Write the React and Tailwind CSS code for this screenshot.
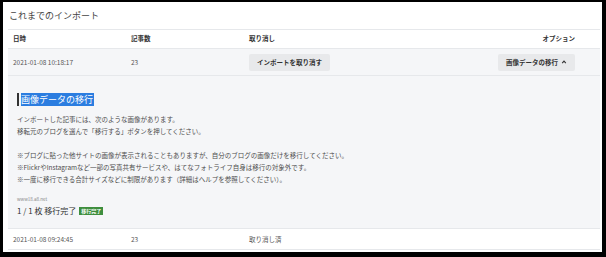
const font = { fontFamily: '"Noto Sans CJK JP", "Noto Sans", sans-serif' };

function Row({ date, count, children, option, className = "" }) {
  return (
    <div
      className={`grid grid-cols-[118px_118px_1fr_auto] items-center pl-[5px] pr-[25px] border-b border-[#e6e8eb] text-[6.5px] leading-[10px] ${className}`}
    >
      <div className="text-[#555]">{date}</div>
      <div className="text-[#555]">{count}</div>
      <div className="flex items-center">{children}</div>
      <div className="flex items-center">{option}</div>
    </div>
  );
}

function GrayButton({ children }) {
  return (
    <button className="h-[17px] rounded-[2px] bg-[#e8e9eb] px-[8px] text-[6.5px] font-bold text-[#333] flex items-center gap-[2px]">
      {children}
    </button>
  );
}

export default function App() {
  return (
    <div
      className="w-[606px] h-[257px] bg-black pt-[2px] pl-[3px] pr-[4px] pb-[5px]"
      style={font}
    >
      <div className="h-full bg-white pl-[5px] pr-[2px] overflow-hidden">
        <div className="h-[27px] flex items-center pl-[1px] text-[9px] text-[#444]">
          これまでのインポート
        </div>

        <div className="grid grid-cols-[118px_118px_1fr_auto] items-center h-[20px] pl-[5px] pr-[25px] border-y border-[#e6e8eb] text-[6.5px] font-bold text-[#333]">
          <div>日時</div>
          <div>記事数</div>
          <div>取り消し</div>
          <div>オプション</div>
        </div>

        <Row
          date="2021-01-08 10:18:17"
          count="23"
          className="h-[27px] bg-[#f5f6f8]"
          option={
            <GrayButton>
              画像データの移行
              <svg width="6" height="6" viewBox="0 0 10 10" className="ml-[1px]">
                <path d="M2 7 L5 3.5 L8 7" fill="none" stroke="#333" strokeWidth="1.8" />
              </svg>
            </GrayButton>
          }
        >
          <GrayButton>インポートを取り消す</GrayButton>
        </Row>

        <div className="h-[153px] bg-[#f5f6f8] border-b border-[#e6e8eb] pl-[9px] pt-[17px]">
          <div className="flex items-stretch h-[13px]">
            <div className="w-[2px] bg-[#333] mr-[2px]" />
            <span className="bg-[#2b7de0] text-white text-[9px] leading-[13px] pr-[1px]">
              画像データの移行
            </span>
          </div>
          <div className="mt-[7px] text-[6.5px] leading-[12px] text-[#4d4d4d]">
            <p>インポートした記事には、次のような画像があります。</p>
            <p>移転元のブログを選んで「移行する」ボタンを押してください。</p>
            <p className="mt-[12px]">
              ※ブログに貼った他サイトの画像が表示されることもありますが、自分のブログの画像だけを移行してください。
            </p>
            <p>※FlickrやInstagramなど一部の写真共有サービスや、はてなフォトライフ自身は移行の対象外です。</p>
            <p>※一度に移行できる合計サイズなどに制限があります（詳細はヘルプを参照してください）。</p>
          </div>
          <div className="mt-[11px] text-[4.5px] leading-[6px] text-[#888]">www18.a8.net</div>
          <div className="mt-[3px] flex items-center h-[12px] text-[8px] text-[#333]">
            <span>1 / 1 枚 移行完了</span>
            <span className="ml-[3px] bg-[#3e8e3e] text-white text-[5px] font-bold leading-[8px] px-[2px]">
              移行完了
            </span>
          </div>
        </div>

        <Row date="2021-01-08 09:24:45" count="23" className="h-[21px]">
          <span className="text-[#555]">取り消し済</span>
        </Row>
      </div>
    </div>
  );
}
